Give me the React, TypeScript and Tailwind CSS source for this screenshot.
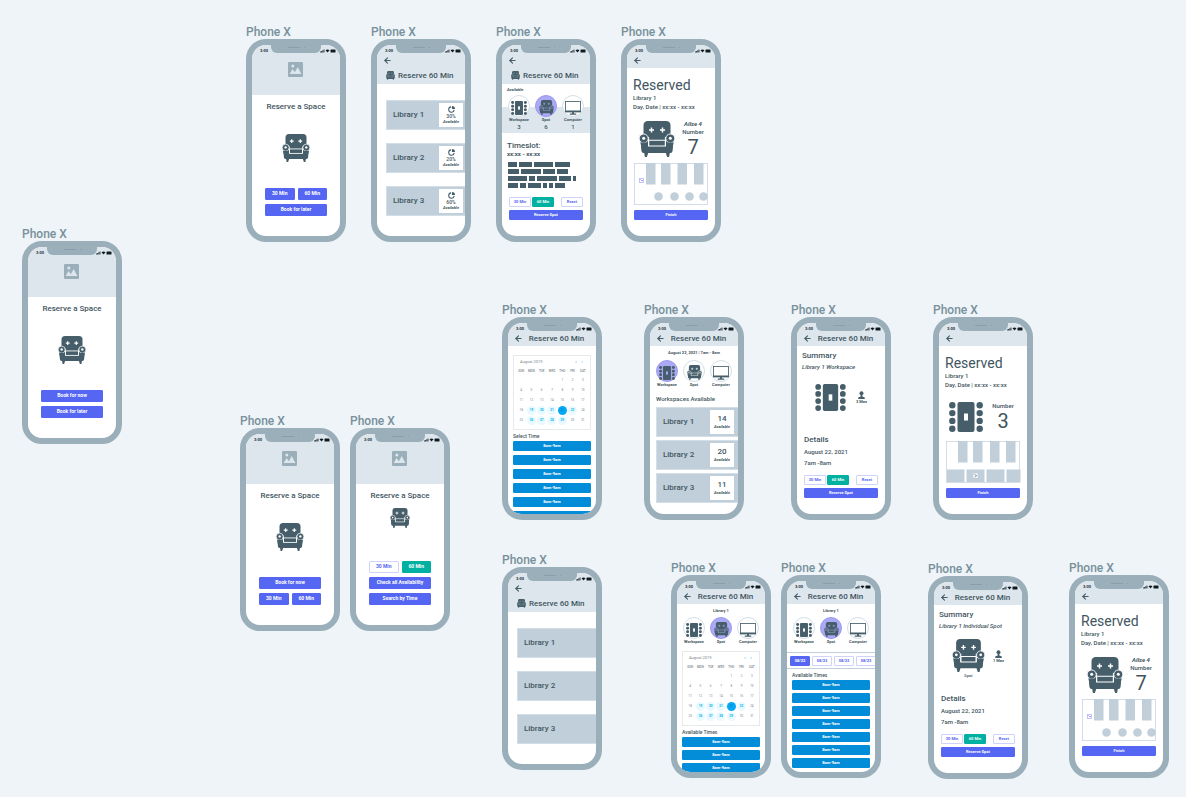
import React from "react";
import clsx from "clsx";
import { ArrowLeft } from "lucide-react";

type IconProps = { className?: string; cut?: string };

function Chair({ className, cut = "#ffffff" }: IconProps) {
    return (
        <svg viewBox="0 0 36 36" className={className} fill="#465e6a" aria-hidden="true">
            <path d="M5 31h4.500l-1.600 5h-2zM26.500 31h4.500l-.9 5h-2z" />
            <path d="M9 0h18q4.500 0 4.500 4.500V20h-27V4.500Q4.500 0 9 0z" />
            <path d="M1.500 19h33l-1 11q-.2 2-2 2h-27q-1.800 0-2-2z" />
            <path d="M9.600 19.200h16.800v5.800H9.600z" stroke={cut} strokeWidth="1.100" />
            <path d="M9.600 16v9M26.400 16v9" stroke={cut} strokeWidth="1" fill="none" />
            <circle cx="4.700" cy="17.500" r="4.500" stroke={cut} strokeWidth=".9" />
            <circle cx="31.300" cy="17.500" r="4.500" stroke={cut} strokeWidth=".9" />
            <path d="M1.500 21.500h7v8.500h-5.500zM34.500 21.500h-7v8.500h5.500z" />
            <circle cx="4.700" cy="17.300" r="1.500" fill={cut} />
            <circle cx="31.300" cy="17.300" r="1.500" fill={cut} />
            <path d="M12.500 6.600v5M10 9.100h5M23.500 6.600v5M21 9.100h5" stroke={cut} strokeWidth="1.500" />
        </svg>
    );
}

function Desk({ className, cut = "#ffffff" }: IconProps) {
    const seats = [3.3, 11.1, 18.9, 26.7];
    return (
        <svg viewBox="0 0 34 30" className={className} fill="#465e6a" aria-hidden="true">
            {seats.map((y) => (
                <g key={y}>
                    <circle cx="3.300" cy={y} r="3.200" />
                    <circle cx="30.700" cy={y} r="3.200" />
                </g>
            ))}
            <rect x="8.500" width="17" height="30" rx="2" />
            <rect x="15" y="11.500" width="4" height="7" fill={cut} />
        </svg>
    );
}

function Computer({ className }: IconProps) {
    return (
        <svg viewBox="0 0 34 30" className={className} fill="#465e6a" aria-hidden="true">
            <rect x="1" y="1" width="32" height="22" fill="#ffffff" stroke="#465e6a" strokeWidth="1.800" />
            <path d="M0 20.500h34v3.500H0zM15 24h4v3h-4zM10 27h14v2.500H10z" />
        </svg>
    );
}

function Picture() {
    return (
        <svg viewBox="0 0 18 18" className="size-[15px]" aria-hidden="true">
            <rect width="18" height="18" rx="1.500" fill="#9aafb9" />
            <path d="M2 14.500 5.500 8.500l2.700 3.700L11.700 6l4.300 8.500z" fill="#dde6ed" />
            <circle cx="5.800" cy="4.800" r="1.800" fill="#dde6ed" />
        </svg>
    );
}

function Pie() {
    return (
        <svg viewBox="0 0 16 16" className="size-[7px]" aria-hidden="true">
            <path d="M7 2a6.200 6.200 0 1 0 7 7" fill="none" stroke="#465e6a" strokeWidth="2.400" />
            <path d="M9 0a7 7 0 0 1 7 7H9z" fill="#465e6a" />
        </svg>
    );
}

function Person() {
    return (
        <svg viewBox="0 0 16 18" className="h-[8px] w-[7px]" fill="#465e6a" aria-hidden="true">
            <circle cx="8" cy="5" r="4.500" />
            <path d="M6 8h4v4.500l5.500 2V18H.5v-3.500l5.500-2z" />
        </svg>
    );
}

function Phone({ place, children }: { place: string; children: React.ReactNode }) {
    return (
        <section className={clsx("absolute w-[100px]", place)}>
            <h2 className="h-[16px] whitespace-nowrap text-[12px] font-medium leading-[18px] text-[#78909c]">Phone X</h2>
            <div className="relative h-[203px] overflow-hidden rounded-[20px] border-6 border-[#9aafb9] bg-white">
                <div className="flex h-full flex-col overflow-hidden rounded-[13px]">{children}</div>
                <div className="absolute left-[19px] top-0 flex h-[8px] w-[50px] justify-center gap-[4px] rounded-b-[6px] bg-[#9aafb9] pt-[2px]">
                    <span className="h-px w-[12px] bg-[#889fab]" />
                    <span className="size-px bg-[#889fab]" />
                </div>
            </div>
        </section>
    );
}

function StatusBar() {
    return (
        <div className="flex h-[9px] shrink-0 items-center justify-between pl-[8px] pr-[4px] pt-[2px]">
            <span className="text-[4px] font-bold leading-[5px] text-[#263238]">3:00</span>
            <svg viewBox="0 0 32 8" className="h-[4px] w-[16px]" fill="#111c22" aria-hidden="true">
                <path d="M0 7V5h1.600v2zM2.400 7V4H4v3zM4.800 7V2.500h1.600V7zM7.200 7V1h1.600v6zM11 2.500q4-3 8 0L15 7z" />
                <rect x="21" y="1" width="10" height="6" rx="1.200" />
            </svg>
        </div>
    );
}

function Back() {
    return (
        <button aria-label="Back" className="flex h-[13px] w-[9px] items-center">
            <ArrowLeft className="size-[9px] text-[#465e6a]" strokeWidth={3} />
        </button>
    );
}

/* back arrow with the title beside it */
function Header({ title }: { title?: string }) {
    return (
        <header className="h-[23px] shrink-0 bg-[#dde6ed]">
            <StatusBar />
            <div className="flex items-center pl-[6px]">
                <Back />
                {title && <h3 className="flex-1 whitespace-nowrap pr-[6px] text-center text-[8px] font-medium leading-[12px]">{title}</h3>}
            </div>
        </header>
    );
}

/* back arrow on top, chair and title below */
function TallHeader() {
    return (
        <header className="h-[39px] shrink-0 bg-[#dde6ed]">
            <StatusBar />
            <div className="pl-[6px]">
                <Back />
            </div>
            <div className="flex h-[17px] items-center gap-[3px] pl-[9px]">
                <Chair className="size-[9px]" cut="#9aafb9" />
                <h3 className="whitespace-nowrap text-[8px] font-medium leading-[12px]">Reserve 60 Min</h3>
            </div>
        </header>
    );
}

const kinds = {
    solid: "border-[#5566f3] bg-[#5566f3] text-white",
    teal: "border-[#00b0a0] bg-[#00b0a0] text-white",
    outline: "border-[#cfd2fb] bg-white text-[#5566f3]",
    time: "border-[#038cd8] bg-[#038cd8] text-white",
};

type ButtonProps = { kind?: keyof typeof kinds; big?: boolean; className?: string; children: React.ReactNode };

function Button({ kind = "solid", big, className, children }: ButtonProps) {
    return (
        <button
            className={clsx(
                "flex shrink-0 items-center justify-center whitespace-nowrap rounded-[1px] border font-bold",
                big ? "h-[12px] text-[5px]" : "h-[10px] text-[4px]",
                kinds[kind],
                className
            )}
        >
            {children}
        </button>
    );
}

function Home({ small, children }: { small?: boolean; children: React.ReactNode }) {
    return (
        <>
            <header className="flex h-[50px] shrink-0 flex-col items-center bg-[#dde6ed]">
                <div className="w-full">
                    <StatusBar />
                </div>
                <div className="mt-[8px] pr-[2px]">
                    <Picture />
                </div>
            </header>
            <h3 className="mt-[6px] text-center text-[8px] font-medium leading-[12px]">Reserve a Space</h3>
            <Chair className={clsx("mx-auto", small ? "mt-[6px] size-[20px]" : "mt-[21px] size-[28px]")} />
            <div className="mx-[13px] mb-[20px] mt-auto flex flex-col gap-[4px]">{children}</div>
        </>
    );
}

function Pair({ first = "solid", second = "solid" }: { first?: keyof typeof kinds; second?: keyof typeof kinds }) {
    return (
        <div className="flex gap-[3px]">
            <Button big kind={first} className="flex-1">30 Min</Button>
            <Button big kind={second} className="flex-1">60 Min</Button>
        </div>
    );
}

function Available() {
    return <span className="text-[4px] font-bold italic leading-[6px]">Available</span>;
}

function Library({ name, inset, children }: { name: string; inset?: boolean; children?: React.ReactNode }) {
    return (
        <button
            className={clsx(
                "flex h-[30px] shrink-0 items-center justify-between border-y border-l border-[#d3dee6] bg-[#c1cfda] pl-[6px] text-left",
                inset ? "pr-[4px]" : "pr-[2px]"
            )}
        >
            <span className="whitespace-nowrap text-[8px] font-medium leading-[10px]">{name}</span>
            {children && <span className="flex size-[24px] flex-col items-center justify-center bg-white">{children}</span>}
        </button>
    );
}

function Libraries({ shares }: { shares?: string[] }) {
    return (
        <>
            <TallHeader />
            <div className="ml-[9px] mt-[16px] flex flex-col gap-[13px]">
                {[1, 2, 3].map((n, i) => (
                    <Library key={n} name={`Library ${n}`}>
                        {shares && (
                            <>
                                <Pie />
                                <span className="text-[5px] font-medium leading-[6px]">{shares[i]}</span>
                                <Available />
                            </>
                        )}
                    </Library>
                ))}
            </div>
        </>
    );
}

function SpaceTabs({ active, counts }: { active: string; counts?: number[] }) {
    return (
        <div className="flex justify-between px-[6px]">
            {["Workspace", "Spot", "Computer"].map((name, i) => {
                const on = name === active;
                const cut = on ? "#aba9f6" : "#ffffff";
                return (
                    <button key={name} className="flex w-[22px] flex-col items-center">
                        <span
                            className={clsx(
                                "flex size-[22px] shrink-0 items-center justify-center rounded-full border pt-[3px]",
                                on ? "border-[#9b9aee] bg-[#aba9f6]" : "border-[#d5dfe6] bg-white"
                            )}
                        >
                            {i === 0 && <Desk className="h-[14px] w-[16px]" cut={cut} />}
                            {i === 1 && <Chair className="size-[15px]" cut={cut} />}
                            {i === 2 && <Computer className="h-[14px] w-[16px]" />}
                        </span>
                        <span className="text-[4px] font-bold leading-[6px]">{name}</span>
                        {counts && <span className="text-[6px] font-medium leading-[8px]">{counts[i]}</span>}
                    </button>
                );
            })}
        </div>
    );
}

function Actions() {
    return (
        <div className="mx-[7px] mb-[16px] mt-auto flex flex-col gap-[3px]">
            <div className="flex gap-px">
                <Button kind="outline" className="w-[22px]">30 Min</Button>
                <Button kind="teal" className="w-[22px]">60 Min</Button>
                <Button kind="outline" className="ml-auto w-[22px]">Reset</Button>
            </div>
            <Button>Reserve Spot</Button>
        </div>
    );
}

const blocks = [
    ["w-[9px]", "w-[13px]", "w-[19px]", "w-[15px]"],
    ["w-[11px]", "w-[20px]", "w-[12px]", "w-[11px]"],
    ["w-[19px]", "w-[6px]", "w-[20px]", "w-[12px]", "w-[3px]"],
    ["w-[10px]", "w-[6px]", "w-[13px]", "w-[4px]", "w-[4px]", "w-[10px]"],
];

function Spots() {
    return (
        <>
            <TallHeader />
            <p className="mt-[3px] pl-[5px] text-[4px] font-bold leading-[6px]">Available</p>
            <div className="mt-[2px] bg-[linear-gradient(to_bottom,#ffffff_12px,#dde6ed_12px)] pb-[2px]">
                <SpaceTabs active="Spot" counts={[3, 6, 1]} />
            </div>
            <h4 className="mt-[8px] pl-[5px] text-[8px] font-medium leading-[10px]">Timeslot:</h4>
            <p className="pl-[5px] text-[6px] font-bold leading-[6px]">xx:xx - xx:xx</p>
            <div className="mt-[5px] flex flex-col gap-[2px] pl-[6px]">
                {blocks.map((row, i) => (
                    <div key={i} className="flex gap-[2px]">
                        {row.map((w, j) => (
                            <span key={j} className={clsx("h-[5px] bg-[#465e6a]", w)} />
                        ))}
                    </div>
                ))}
            </div>
            <Actions />
        </>
    );
}

function FloorPlan({ desks }: { desks?: boolean }) {
    const bars = desks ? [12, 27, 44, 60] : [12, 27, 43.5, 60];
    return (
        <svg viewBox="0 0 76 42" className="ml-[7px] mt-[5px] h-[42px] w-[76px] shrink-0" fill="#c1cfda" aria-hidden="true">
            <rect x=".5" y=".5" width="73" height="41" fill="#ffffff" stroke="#d3dee6" />
            {bars.map((x) => (
                <rect key={x} x={x} y="0" width="9.500" height="21.500" />
            ))}
            {desks ? (
                <>
                    <path d="M1 28.500h17.500V41H1zM20.500 28.500h18V41h-18zM40.500 28.500h18V41h-18zM60.500 28.500h14V41h-14z" />
                    <rect x="27.500" y="32.500" width="4" height="4.500" fill="#ffffff" />
                    <path d="M28.500 33.500l2 1-1.500 2" stroke="#465e6a" strokeWidth=".7" fill="none" />
                </>
            ) : (
                <>
                    <circle cx="24.500" cy="33.500" r="4.300" />
                    <circle cx="40.500" cy="33.500" r="4.300" />
                    <circle cx="55.500" cy="33.500" r="4.300" />
                    <circle cx="69.500" cy="33.500" r="4.300" />
                    <rect x="5.500" y="15.500" width="4" height="4" fill="#ffffff" stroke="#b3b5f7" strokeWidth=".8" />
                    <path d="M6.500 16.500l1.500 1.500 1-1" stroke="#5566f3" strokeWidth=".6" fill="none" />
                </>
            )}
        </svg>
    );
}

function Reserved({ desks }: { desks?: boolean }) {
    return (
        <>
            <Header />
            <h3 className="mt-[9px] pl-[6px] text-[14px] leading-[16px]">Reserved</h3>
            <p className="pl-[6px] text-[6px] font-medium leading-[9px]">Library 1</p>
            <p className="whitespace-nowrap pl-[6px] text-[6px] font-medium leading-[9px]">Day, Date | xx:xx - xx:xx</p>
            <div className="mt-[9px] flex h-[38px] shrink-0 items-center pl-[10px]">
                {desks ? <Desk className="h-[30px] w-[34px]" /> : <Chair className="ml-[2px] size-[36px]" />}
                <div className="flex flex-1 flex-col items-center pr-[4px]">
                    {!desks && <span className="whitespace-nowrap text-[6px] font-bold italic leading-[8px]">Ailse 4</span>}
                    <span className="text-[6px] font-medium leading-[8px]">Number</span>
                    <span className="text-[20px] leading-[22px]">{desks ? 3 : 7}</span>
                </div>
            </div>
            <FloorPlan desks={desks} />
            <Button className="mx-[7px] mb-[16px] mt-auto">Finish</Button>
        </>
    );
}

const weekdays = ["SUN", "MON", "TUE", "WED", "THU", "FRI", "SAT"];
const weeks = [0, 1, 2, 3, 4].map((w) => weekdays.map((_, d) => w * 7 + d - 3));
const open = [19, 20, 21, 23, 26, 27, 28, 29];

function Calendar() {
    return (
        <div className="mx-[5px] h-[75px] shrink-0 border border-[#e6eaed] px-[2px] text-[3px] text-[#78848b]">
            <div className="flex h-[11px] items-center pl-[4px] pr-[4px]">
                <span className="flex-1 text-[4px]">August 2019</span>
                <button aria-label="Previous month" className="w-[8px] text-[5px]">‹</button>
                <button aria-label="Next month" className="w-[4px] text-[5px] text-[#03a9f4]">›</button>
            </div>
            <table className="w-full table-fixed border-collapse text-center">
                <thead>
                    <tr className="h-[8px]">
                        {weekdays.map((d) => (
                            <th key={d} className="p-0 font-medium leading-[4px]">{d}</th>
                        ))}
                    </tr>
                </thead>
                <tbody>
                    {weeks.map((week, i) => (
                        <tr key={i} className="h-[10px]">
                            {week.map((day) => (
                                <td key={day} className="p-0">
                                    <span
                                        className={clsx(
                                            "mx-auto flex size-[9px] items-center justify-center rounded-full leading-[4px]",
                                            day === 22 && "bg-[#03a9f4] text-[#0277bd]",
                                            open.includes(day) && "bg-[#e8f9ff] font-bold text-[#03b4e8]"
                                        )}
                                    >
                                        {day > 0 ? day : ""}
                                    </span>
                                </td>
                            ))}
                        </tr>
                    ))}
                </tbody>
            </table>
        </div>
    );
}

function Times({ title, count, wide }: { title: string; count: number; wide?: boolean }) {
    return (
        <div className="mt-[3px] px-[5px]">
            <h4 className="text-[5px] font-medium leading-[6px]">{title}</h4>
            <div className={clsx("mt-[2px] flex flex-col", wide ? "gap-[4px]" : "gap-[3px]")}>
                {Array.from({ length: count }, (_, i) => (
                    <Button key={i} kind="time">8am-9am</Button>
                ))}
            </div>
        </div>
    );
}

function ByTime() {
    return (
        <>
            <Header title="Reserve 60 Min" />
            <div className="h-[9px] shrink-0" />
            <Calendar />
            <Times title="Select Time" count={6} wide />
        </>
    );
}

function Workspaces() {
    return (
        <>
            <Header title="Reserve 60 Min" />
            <p className="mb-[4px] mt-[4px] whitespace-nowrap text-center text-[4px] font-bold leading-[6px]">August 22, 2021 | 7am - 8am</p>
            <SpaceTabs active="Workspace" />
            <h4 className="mt-[7px] whitespace-nowrap pl-[6px] text-[6px] font-medium leading-[8px]">Workspaces Available</h4>
            <div className="ml-[6px] mt-[4px] flex flex-col gap-[3px]">
                {[14, 20, 11].map((free, i) => (
                    <Library key={free} name={`Library ${i + 1}`} inset>
                        <span className="text-[8px] font-medium leading-[10px]">{free}</span>
                        <Available />
                    </Library>
                ))}
            </div>
        </>
    );
}

function Summary({ desks }: { desks?: boolean }) {
    return (
        <>
            <Header title="Reserve 60 Min" />
            <h4 className="mt-[4px] pl-[5px] text-[8px] font-medium leading-[12px]">Summary</h4>
            <p className="whitespace-nowrap pl-[5px] text-[6px] font-medium italic leading-[10px]">
                {desks ? "Library 1 Workspace" : "Library 1 Individual Spot"}
            </p>
            <div className="mt-[8px] flex h-[40px] shrink-0 items-start justify-between pl-[18px] pr-[18px]">
                <div className="flex flex-col items-center">
                    {desks ? <Desk className="mt-[4px] h-[27px] w-[31px]" /> : <Chair className="size-[33px]" />}
                    {!desks && <span className="mt-px text-[4px] font-medium leading-[6px]">Spot</span>}
                </div>
                <div className="mt-[11px] flex flex-col items-center">
                    <Person />
                    <span className="whitespace-nowrap text-[4px] font-bold leading-[6px]">{desks ? "3 Max" : "1 Max"}</span>
                </div>
            </div>
            <div className="mt-[14px] pl-[7px] text-[6px] font-medium">
                <h4 className="text-[8px] leading-[12px]">Details</h4>
                <p className="leading-[11px]">August 22, 2021</p>
                <p className="leading-[11px]">7am -8am</p>
            </div>
            <Actions />
        </>
    );
}

function LibrarySpots({ dates }: { dates?: boolean }) {
    return (
        <>
            <Header title="Reserve 60 Min" />
            <p className="mb-[3px] mt-[4px] text-center text-[4px] font-bold leading-[6px]">Library 1</p>
            <SpaceTabs active="Spot" />
            {dates ? (
                <>
                    <div className="mt-[7px] flex h-[17px] shrink-0 items-center gap-[2px] overflow-hidden border-y border-[#c1cfda] pl-[3px]">
                        {["08/22", "08/23", "08/23", "08/23"].map((d, i) => (
                            <Button key={i} kind={i ? "outline" : "solid"} className="w-[20px]">{d}</Button>
                        ))}
                    </div>
                    <Times title="Available Times" count={7} />
                </>
            ) : (
                <>
                    <div className="h-[6px] shrink-0" />
                    <Calendar />
                    <Times title="Available Times" count={3} />
                </>
            )}
        </>
    );
}

export default function App() {
    return (
        <main className="relative min-h-screen w-full overflow-hidden bg-[#eef4f7] font-['Roboto',sans-serif] text-[#3f5560]">
            <Phone place="left-[246px] top-[23px]">
                <Home>
                    <Pair />
                    <Button big>Book for later</Button>
                </Home>
            </Phone>
            <Phone place="left-[371px] top-[23px]">
                <Libraries shares={["30%", "20%", "60%"]} />
            </Phone>
            <Phone place="left-[496px] top-[23px]">
                <Spots />
            </Phone>
            <Phone place="left-[621px] top-[23px]">
                <Reserved />
            </Phone>

            <Phone place="left-[22px] top-[225px]">
                <Home>
                    <Button big>Book for now</Button>
                    <Button big>Book for later</Button>
                </Home>
            </Phone>
            <Phone place="left-[240px] top-[412px]">
                <Home>
                    <Button big>Book for now</Button>
                    <Pair />
                </Home>
            </Phone>
            <Phone place="left-[350px] top-[412px]">
                <Home small>
                    <Pair first="outline" second="teal" />
                    <Button big>Check all Availability</Button>
                    <Button big>Search by Time</Button>
                </Home>
            </Phone>

            <Phone place="left-[502px] top-[301px]">
                <ByTime />
            </Phone>
            <Phone place="left-[644px] top-[301px]">
                <Workspaces />
            </Phone>
            <Phone place="left-[791px] top-[301px]">
                <Summary desks />
            </Phone>
            <Phone place="left-[933px] top-[301px]">
                <Reserved desks />
            </Phone>

            <Phone place="left-[502px] top-[551px]">
                <Libraries />
            </Phone>
            <Phone place="left-[671px] top-[559px]">
                <LibrarySpots />
            </Phone>
            <Phone place="left-[781px] top-[559px]">
                <LibrarySpots dates />
            </Phone>
            <Phone place="left-[928px] top-[560px]">
                <Summary />
            </Phone>
            <Phone place="left-[1069px] top-[559px]">
                <Reserved />
            </Phone>
        </main>
    );
}
